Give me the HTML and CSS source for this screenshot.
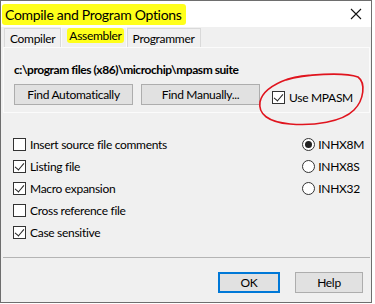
FILE: index.html
```html
<!DOCTYPE html>
<html>
<head>
    <meta charset="UTF-8">
    <title>Compile and Program Options</title>
    <link rel="stylesheet" href="styles.css">
</head>
<body>
    <div class="window">
        <div class="titlebar">
            <span class="title hl">Compile and Program Options</span>
            <svg class="close" width="12" height="12" viewBox="0 0 12 12">
                <path d="M1 1 L11 11 M11 1 L1 11" stroke="#111" stroke-width="1.1" fill="none"/>
            </svg>
        </div>
        <div class="body">
            <div class="tabs">
                <div class="tab">Compiler</div>
                <div class="tab active"><span class="hl">Assembler</span></div>
                <div class="tab">Programmer</div>
            </div>
            <div class="panel">
                <div class="path">c:\program files (x86)\microchip\mpasm suite</div>
                <div class="btnrow">
                    <div class="btn wide">Find Automatically</div>
                    <div class="btn wide">Find Manually...</div>
                    <div class="check use"><span class="box on"></span>Use MPASM</div>
                </div>
            </div>
            <div class="options">
                <div class="checks">
                    <div class="check"><span class="box"></span>Insert source file comments</div>
                    <div class="check"><span class="box on"></span>Listing file</div>
                    <div class="check"><span class="box on"></span>Macro expansion</div>
                    <div class="check"><span class="box"></span>Cross reference file</div>
                    <div class="check"><span class="box on"></span>Case sensitive</div>
                </div>
                <div class="radios">
                    <div class="radio"><span class="dot on"></span>INHX8M</div>
                    <div class="radio"><span class="dot"></span>INHX8S</div>
                    <div class="radio"><span class="dot"></span>INHX32</div>
                </div>
            </div>
        </div>
        <div class="footer">
            <div class="btn ok">OK</div>
            <div class="btn help">Help</div>
        </div>
    </div>

    <!-- red marker circle drawn over the dialog -->
    <svg class="scribble" width="115" height="60" viewBox="0 0 115 60">
        <path d="M32 10 C 50 4, 90 2, 104 7 C 112 13, 110 30, 100 40 C 88 52, 60 56, 36 54 C 14 52, 4 44, 6 32 C 8 22, 20 14, 34 9 C 44 6, 54 5, 62 5"
              stroke="#e0141e" stroke-width="1.6" fill="none" stroke-linecap="round"/>
    </svg>
</body>
</html>
```

FILE: styles.css
```css
body {
    margin: 0;
    background: #fff;
    font-family: Lato, "Noto Sans", sans-serif;
    font-size: 12px;
    letter-spacing: -0.3px;
    color: #000;
}
.window {
    width: 370px;
    height: 301px;
    border: 1px solid #6e6e6e;
    display: flex;
    flex-direction: column;
    background: #f0f0f0;
}
.titlebar {
    height: 26px;
    background: #fff;
    display: flex;
    align-items: center;
    justify-content: space-between;
    padding: 0 9px 0 1px;
}
.title {
    font-size: 14px;
    padding: 2px 4px 2px 3px;
}
.hl {
    background: #ffff1a;
    border-radius: 3px;
}
.close {
    display: block;
}
.body {
    flex: 1;
    display: flex;
    flex-direction: column;
    padding: 0 1px 0 2px;
}
.tabs {
    display: flex;
    padding-left: 1px;
    height: 20px;
    align-items: flex-end;
}
.tab {
    height: 19px;
    line-height: 19px;
    padding: 0 5px;
    border: 1px solid #d9d9d9;
    border-bottom: none;
    background: #f0f0f0;
    box-sizing: border-box;
}
.tab.active {
    height: 20px;
    border-color: #fbfbfb;
    padding: 0 2px 0 5px;
}
.tab.active .hl {
    padding: 0 2px;
    display: inline-block;
    line-height: 15px;
    vertical-align: 2px;
}
.panel {
    border: 1px solid #fbfbfb;
    height: 66px;
    box-sizing: border-box;
    padding: 14px 10px 0 10px;
}
.path {
    font-weight: bold;
    line-height: 15px;
    letter-spacing: -0.45px;
}
.btnrow {
    display: flex;
    align-items: flex-start;
    gap: 8px;
    margin-top: 7px;
}
.btn {
    height: 21px;
    box-sizing: border-box;
    border: 1px solid #adadad;
    background: #e1e1e1;
    display: flex;
    align-items: center;
    justify-content: center;
}
.btn.wide {
    width: 119px;
}
.check {
    display: flex;
    align-items: center;
    height: 22px;
}
.check.use {
    margin-left: 4px;
    margin-top: 2px;
}
.box {
    width: 13px;
    height: 13px;
    box-sizing: border-box;
    border: 1px solid #333;
    background: #fff;
    margin-right: 4px;
    position: relative;
}
.box.on::after {
    content: "";
    position: absolute;
    left: 3px;
    top: 0px;
    width: 4px;
    height: 8px;
    border: solid #222;
    border-width: 0 1px 1px 0;
    transform: rotate(40deg);
}
.options {
    flex: 1;
    display: flex;
    justify-content: space-between;
    padding: 20px 0 0 10px;
    border-bottom: 1px solid #b4b4b4;
}
.checks .check {
    height: 22px;
}
.radios {
    padding-right: 6px;
}
.radio {
    display: flex;
    align-items: center;
    height: 22px;
}
.dot {
    width: 13px;
    height: 13px;
    box-sizing: border-box;
    border: 1px solid #333;
    border-radius: 50%;
    background: #fff;
    margin-right: 3px;
    display: flex;
    align-items: center;
    justify-content: center;
}
.dot.on::after {
    content: "";
    width: 7px;
    height: 7px;
    border-radius: 50%;
    background: #222;
}
.footer {
    height: 44px;
    display: flex;
    justify-content: flex-end;
    align-items: flex-start;
    gap: 15px;
    padding: 14px 8px 0 0;
    box-sizing: border-box;
}
.btn.ok {
    width: 62px;
    border: 2px solid #0078d7;
}
.btn.help {
    width: 68px;
}
.scribble {
    position: absolute;
    left: 254px;
    top: 70px;
}
```
